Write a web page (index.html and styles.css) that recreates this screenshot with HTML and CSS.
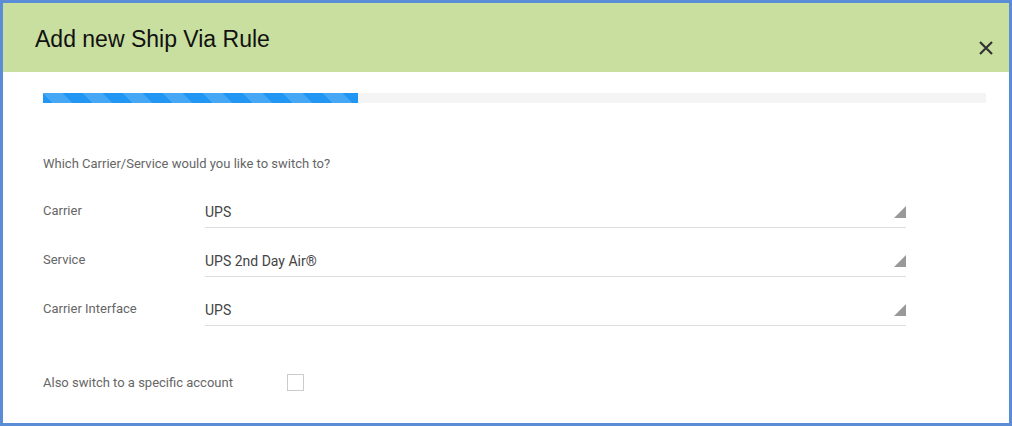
FILE: index.html
```html
<!DOCTYPE html>
<html>
<head>
<meta charset="utf-8">
<link rel="stylesheet" href="styles.css">
</head>
<body>
<div class="dialog">
  <div class="header">
    <h1 class="title">Add new Ship Via Rule</h1>
    <button class="close" aria-label="Close">
      <svg width="16" height="16" viewBox="0 0 16 16"><path d="M2 2 L14 14 M14 2 L2 14" stroke="#333" stroke-width="2.2" fill="none"/></svg>
    </button>
  </div>
  <div class="body">
    <div class="progress"><div class="progress-bar" style="width:33.4%"></div></div>
    <p class="question">Which Carrier/Service would you like to switch to?</p>
    <div class="rows">
      <div class="row">
        <div class="label">Carrier</div>
        <div class="field"><span class="value">UPS</span><span class="caret"></span></div>
      </div>
      <div class="row">
        <div class="label">Service</div>
        <div class="field"><span class="value">UPS 2nd Day Air®</span><span class="caret"></span></div>
      </div>
      <div class="row">
        <div class="label">Carrier Interface</div>
        <div class="field"><span class="value">UPS</span><span class="caret"></span></div>
      </div>
    </div>
    <div class="check-row">
      <div class="check-label">Also switch to a specific account</div>
      <span class="checkbox"></span>
    </div>
  </div>
</div>
</body>
</html>
```
FILE: styles.css
```css
html, body {
  margin: 0;
  padding: 0;
  background: #fff;
}
body {
  font-family: Roboto, "Liberation Sans", Arial, sans-serif;
  width: 1012px;
  height: 426px;
  overflow: hidden;
}
.dialog {
  box-sizing: border-box;
  width: 1012px;
  height: 426px;
  border: 3px solid #5a8dd6;
  background: #fff;
}
.header {
  height: 69px;
  background: #c8df9f;
  display: flex;
  align-items: flex-start;
  justify-content: space-between;
}
.title {
  margin: 0;
  padding: 22px 0 0 32px;
  font-family: "Liberation Sans", Arial, sans-serif;
  font-size: 23px;
  font-weight: normal;
  line-height: 28px;
  color: #111;
}
.close {
  border: 0;
  background: none;
  padding: 0;
  margin: 37px 15px 0 0;
  width: 16px;
  height: 16px;
  display: block;
}
.close svg { display: block; }
.body {
  padding: 21px 23px 0 40px;
}
.progress {
  height: 10px;
  background: #f4f4f4;
}
.progress-bar {
  height: 10px;
  background-color: #2196f3;
  background-image: linear-gradient(45deg, rgba(255,255,255,.17) 25%, transparent 25%, transparent 50%, rgba(255,255,255,.17) 50%, rgba(255,255,255,.17) 75%, transparent 75%, transparent);
  background-size: 40px 40px;
}
.question {
  margin: 53px 0 0 0;
  font-size: 13px;
  line-height: 16px;
  color: #666;
}
.rows {
  margin-top: 23px;
  display: flex;
  flex-direction: column;
  gap: 16px;
}
.row {
  display: flex;
  align-items: center;
}
.label {
  width: 162px;
  font-size: 13px;
  color: #666;
  line-height: 16px;
  padding-bottom: 1px;
}
.field {
  width: 701px;
  height: 32px;
  border-bottom: 1px solid #ddd;
  display: flex;
  align-items: center;
  justify-content: space-between;
}
.value {
  font-size: 14px;
  color: #444;
  line-height: 16px;
  padding-top: 1px;
}
.caret {
  align-self: flex-end;
  margin-bottom: 9px;
  width: 0;
  height: 0;
  border-style: solid;
  border-width: 0 0 12px 12px;
  border-color: transparent transparent #999 transparent;
}
.check-row {
  margin-top: 47px;
  display: flex;
  align-items: center;
}
.check-label {
  width: 244px;
  font-size: 13px;
  color: #666;
  line-height: 16px;
  padding-top: 2px;
}
.checkbox {
  box-sizing: border-box;
  width: 17px;
  height: 17px;
  border: 1px solid #ccc;
  background: #fff;
}
```
